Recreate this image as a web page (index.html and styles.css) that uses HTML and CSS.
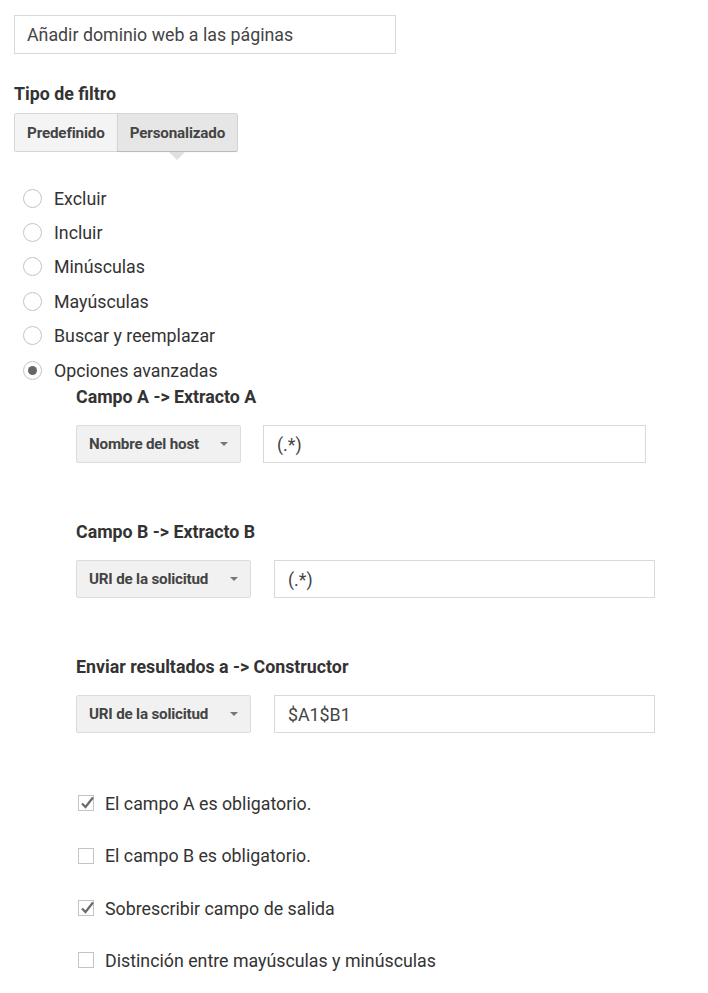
FILE: index.html
```html
<!DOCTYPE html>
<html lang="es">
<head>
<meta charset="utf-8">
<title>Filtro</title>
<link rel="stylesheet" href="styles.css">
</head>
<body>
<div class="page">
  <div class="textfield name-field">Añadir dominio web a las páginas</div>

  <div class="section-title">Tipo de filtro</div>
  <div class="tabs">
    <div class="tab">Predefinido</div>
    <div class="tab active">Personalizado</div>
  </div>

  <div class="radios">
    <div class="radio-row"><span class="radio"></span><span>Excluir</span></div>
    <div class="radio-row"><span class="radio"></span><span>Incluir</span></div>
    <div class="radio-row"><span class="radio"></span><span>Minúsculas</span></div>
    <div class="radio-row"><span class="radio"></span><span>Mayúsculas</span></div>
    <div class="radio-row"><span class="radio"></span><span>Buscar y reemplazar</span></div>
    <div class="radio-row"><span class="radio checked"></span><span>Opciones avanzadas</span></div>
  </div>

  <div class="advanced">
    <div class="field-label first">Campo A -&gt; Extracto A</div>
    <div class="field-row">
      <div class="select sel-a">Nombre del host<span class="arrow"></span></div>
      <div class="textfield input-a">(.*)</div>
    </div>

    <div class="field-label">Campo B -&gt; Extracto B</div>
    <div class="field-row">
      <div class="select sel-b">URI de la solicitud<span class="arrow"></span></div>
      <div class="textfield input-b">(.*)</div>
    </div>

    <div class="field-label">Enviar resultados a -&gt; Constructor</div>
    <div class="field-row">
      <div class="select sel-b">URI de la solicitud<span class="arrow"></span></div>
      <div class="textfield input-b">$A1$B1</div>
    </div>

    <div class="checks">
      <div class="check-row"><span class="checkbox checked"><svg viewBox="0 0 16 16" width="16" height="16"><path d="M3 8.5 L6.5 12 L14 2.5" fill="none" stroke="#6a6a6a" stroke-width="2.2"/></svg></span><span>El campo A es obligatorio.</span></div>
      <div class="check-row"><span class="checkbox"></span><span>El campo B es obligatorio.</span></div>
      <div class="check-row"><span class="checkbox checked"><svg viewBox="0 0 16 16" width="16" height="16"><path d="M3 8.5 L6.5 12 L14 2.5" fill="none" stroke="#6a6a6a" stroke-width="2.2"/></svg></span><span>Sobrescribir campo de salida</span></div>
      <div class="check-row"><span class="checkbox"></span><span>Distinción entre mayúsculas y minúsculas</span></div>
    </div>
  </div>
</div>
</body>
</html>
```

FILE: styles.css
```css
html, body {
  margin: 0;
  padding: 0;
  background: #ffffff;
}

.page {
  padding: 15px 0 0 14px;
  font-family: Roboto, "Noto Sans", "Liberation Sans", sans-serif;
  color: #333333;
}

.textfield {
  box-sizing: border-box;
  height: 38px;
  border: 1px solid #d9d9d9;
  padding-left: 13px;
  display: flex;
  align-items: center;
  font-size: 17.8px;
  color: #444444;
}

.name-field {
  width: 382px;
  height: 39px;
  padding-left: 12px;
}

.section-title {
  margin-top: 30px;
  font-size: 17.8px;
  line-height: 20px;
  font-weight: 700;
  color: #333333;
}

.tabs {
  margin-top: 9px;
  display: flex;
  width: max-content;
  height: 39px;
  box-sizing: border-box;
  border: 1px solid #d6d6d6;
  border-radius: 2px;
}

.tab {
  position: relative;
  display: flex;
  align-items: center;
  padding: 0 12px;
  font-size: 15.2px;
  font-weight: 700;
  letter-spacing: -0.15px;
  color: #444444;
  background: #f4f4f4;
}

.tab + .tab {
  border-left: 1px solid #d6d6d6;
}

.tab.active {
  background: #e6e6e6;
  box-shadow: 0 1px 1px rgba(0, 0, 0, 0.12);
}

.tab.active::after {
  content: "";
  position: absolute;
  left: 50%;
  bottom: -9px;
  margin-left: -8px;
  border-left: 8px solid transparent;
  border-right: 8px solid transparent;
  border-top: 8px solid #e0e0e0;
}

.radios {
  margin-top: 29px;
}

.radio-row {
  display: flex;
  align-items: center;
  height: 34.4px;
  font-size: 17.8px;
  color: #333333;
}

.radio {
  box-sizing: border-box;
  width: 19px;
  height: 19px;
  margin-left: 9px;
  margin-right: 12px;
  border: 1px solid #c4c4c4;
  border-radius: 50%;
  display: flex;
  align-items: center;
  justify-content: center;
}

.radio.checked::after {
  content: "";
  width: 9px;
  height: 9px;
  border-radius: 50%;
  background: #666666;
}

.advanced {
  padding-left: 62px;
}

.field-label {
  margin-top: 59px;
  font-size: 17.8px;
  line-height: 20px;
  font-weight: 700;
  color: #333333;
}

.field-label.first {
  margin-top: 0;
}

.field-row {
  margin-top: 18px;
  display: flex;
  gap: 22px;
}

.select {
  box-sizing: border-box;
  height: 38px;
  display: flex;
  align-items: center;
  padding-left: 12px;
  background: #f1f1f1;
  border: 1px solid #dcdcdc;
  border-radius: 2px;
  font-size: 15.2px;
  font-weight: 700;
  letter-spacing: -0.2px;
  color: #444444;
}

.arrow {
  margin-left: auto;
  margin-right: 12px;
  width: 0;
  height: 0;
  border-left: 4px solid transparent;
  border-right: 4px solid transparent;
  border-top: 4px solid #777777;
}

.sel-a {
  width: 165px;
}

.input-a {
  width: 383px;
}

.sel-b {
  width: 175px;
}

.sel-b + .textfield {
  margin-left: 1px;
}

.input-b {
  width: 381px;
}

.checks {
  margin-top: 44px;
}

.check-row {
  display: flex;
  align-items: center;
  height: 52.3px;
  font-size: 17.8px;
  color: #333333;
}

.checkbox {
  box-sizing: border-box;
  width: 16px;
  height: 16px;
  margin-left: 2px;
  margin-right: 11px;
  border: 1px solid #c4c4c4;
  position: relative;
}

.checkbox svg {
  position: absolute;
  left: 0;
  top: -1px;
}
```
